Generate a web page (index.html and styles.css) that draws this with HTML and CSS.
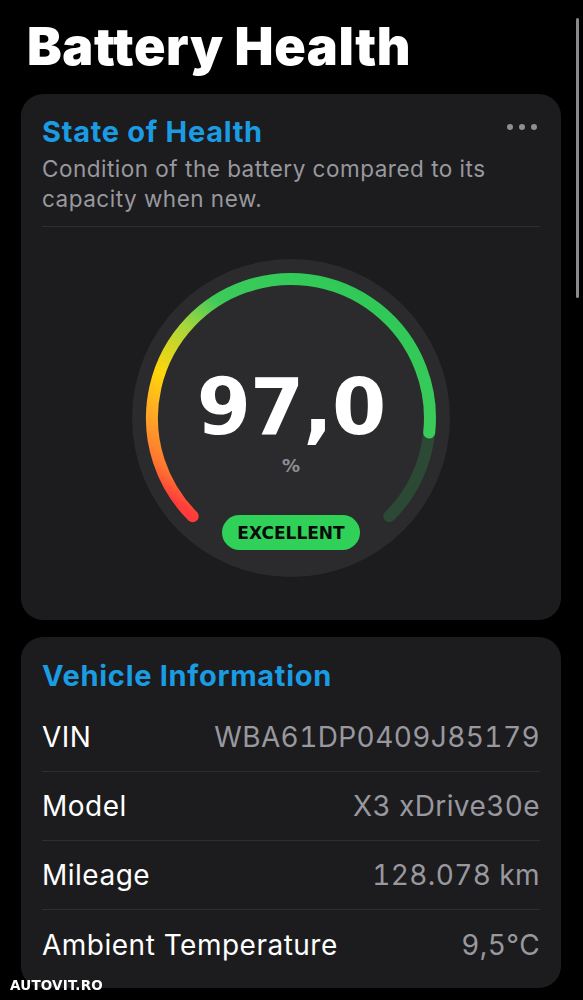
FILE: index.html
```html
<!DOCTYPE html>
<html lang="en">
<head>
    <meta charset="UTF-8">
    <meta name="viewport" content="width=device-width, initial-scale=1.0">
    <title>Battery Health</title>
    <link rel="stylesheet" href="styles.css">
</head>
<body>
    <div class="scrollbar"></div>
    <main class="screen">
        <h1 class="page-title">Battery Health</h1>

        <section class="card health-card">
            <div class="card-head">
                <h2 class="card-title">State of Health</h2>
                <span class="more"><i></i><i></i><i></i></span>
            </div>
            <p class="card-desc">Condition of the battery compared to its capacity when new.</p>
            <div class="divider"></div>

            <div class="gauge">
                <svg class="gauge-arc" viewBox="0 0 318 318" width="318" height="318">
                    <defs>
                        <linearGradient id="arcGrad" gradientUnits="userSpaceOnUse" x1="63" y1="257" x2="217" y2="30">
                            <stop offset="0" stop-color="#ff3b3b"/>
                            <stop offset="0.08" stop-color="#ff7430"/>
                            <stop offset="0.22" stop-color="#ffa826"/>
                            <stop offset="0.36" stop-color="#ffd60a"/>
                            <stop offset="0.55" stop-color="#a9d63c"/>
                            <stop offset="0.7" stop-color="#3ccb5b"/>
                            <stop offset="1" stop-color="#30c957"/>
                        </linearGradient>
                    </defs>
                    <!-- remaining part of the scale -->
                    <path d="M297.2 173.5 A139 139 0 0 1 257.3 257.3" fill="none" stroke="#30d158" stroke-opacity="0.18" stroke-width="12" stroke-linecap="round"/>
                    <!-- filled part -->
                    <path d="M60.7 257.3 A139 139 0 1 1 297.2 173.5" fill="none" stroke="url(#arcGrad)" stroke-width="12" stroke-linecap="round"/>
                </svg>
                <div class="gauge-value">97,0</div>
                <div class="gauge-unit">%</div>
                <div class="gauge-badge">EXCELLENT</div>
            </div>
        </section>

        <section class="card info-card">
            <h2 class="card-title">Vehicle Information</h2>
            <div class="info-row">
                <span class="info-label">VIN</span>
                <span class="info-value">WBA61DP0409J85179</span>
            </div>
            <div class="info-row">
                <span class="info-label">Model</span>
                <span class="info-value">X3 xDrive30e</span>
            </div>
            <div class="info-row">
                <span class="info-label">Mileage</span>
                <span class="info-value">128.078 km</span>
            </div>
            <div class="info-row">
                <span class="info-label">Ambient Temperature</span>
                <span class="info-value">9,5°C</span>
            </div>
        </section>
    </main>
    <div class="watermark">AUTOVIT.RO</div>
</body>
</html>
```

FILE: styles.css
```css
body {
    margin: 0;
    padding: 0;
    background-color: #000;
    color: #fff;
    font-family: 'Inter', 'Liberation Sans', sans-serif;
    overflow: hidden;
}
.screen {
    padding: 16px 22px 0 21px;
}
.page-title {
    margin: 0 0 17px 6px;
    font-size: 52px;
    line-height: 61px;
    font-weight: 900;
    letter-spacing: 0.6px;
}
.card {
    background: #1c1c1e;
    border-radius: 22px;
    padding: 21px 21px 0 21px;
}
.health-card {
    height: 526px;
    box-sizing: border-box;
}
.info-card {
    margin-top: 17px;
    padding-top: 22px;
    padding-bottom: 9px;
}
.card-head {
    display: flex;
    justify-content: space-between;
    align-items: flex-start;
}
.card-title {
    margin: 0;
    font-size: 29px;
    line-height: 34px;
    font-weight: 700;
    letter-spacing: 0.7px;
    color: #1b9be2;
}
.more {
    display: flex;
    gap: 6px;
    margin-top: 9px;
    margin-right: 3px;
}
.more i {
    width: 6px;
    height: 6px;
    border-radius: 50%;
    background: #8e8e93;
}
.card-desc {
    margin: 5px 0 0 0;
    font-size: 22.5px;
    line-height: 30px;
    letter-spacing: 0.5px;
    color: #98989e;
}
.divider {
    height: 1px;
    background: #2e2e31;
    margin-top: 12px;
}
.gauge {
    position: relative;
    width: 318px;
    height: 318px;
    margin: 32px auto 0 auto;
    border-radius: 50%;
    background: #2b2b2e;
    display: flex;
    flex-direction: column;
    align-items: center;
    padding-top: 109px;
    box-sizing: border-box;
}
.gauge-arc {
    position: absolute;
    top: 0;
    left: 0;
}
.gauge-value {
    position: relative;
    font-family: 'DejaVu Sans', sans-serif;
    font-weight: 700;
    font-size: 78px;
    line-height: 1;
    letter-spacing: -1px;
}
.gauge-unit {
    position: relative;
    margin-top: 11px;
    font-family: 'DejaVu Sans', sans-serif;
    font-weight: 700;
    font-size: 18px;
    line-height: 1;
    color: #8e8e93;
}
.gauge-badge {
    position: relative;
    margin-top: 40px;
    width: 138px;
    height: 35px;
    border-radius: 18px;
    background: #30d158;
    color: #0a0a0a;
    font-family: 'DejaVu Sans', sans-serif;
    font-weight: 700;
    font-size: 17px;
    display: flex;
    align-items: center;
    justify-content: center;
}
.info-card .card-title {
    margin-bottom: 10px;
}
.info-row {
    display: flex;
    justify-content: space-between;
    align-items: center;
    height: 69px;
    font-size: 28px;
    letter-spacing: 0.5px;
    border-bottom: 1px solid #2e2e31;
    box-sizing: border-box;
}
.info-row:last-child {
    border-bottom: none;
}
.info-label {
    color: #fff;
}
.info-value {
    color: #98989e;
    font-variant-numeric: tabular-nums;
    letter-spacing: 0.4px;
}
.scrollbar {
    position: fixed;
    top: 18px;
    right: 4px;
    width: 3px;
    height: 280px;
    border-radius: 2px;
    background: #8a8a8e;
}
.watermark {
    position: fixed;
    left: 10px;
    top: 977px;
    font-family: 'DejaVu Sans', sans-serif;
    font-weight: 700;
    font-size: 13.5px;
    color: #fff;
    letter-spacing: 0.2px;
}
```
